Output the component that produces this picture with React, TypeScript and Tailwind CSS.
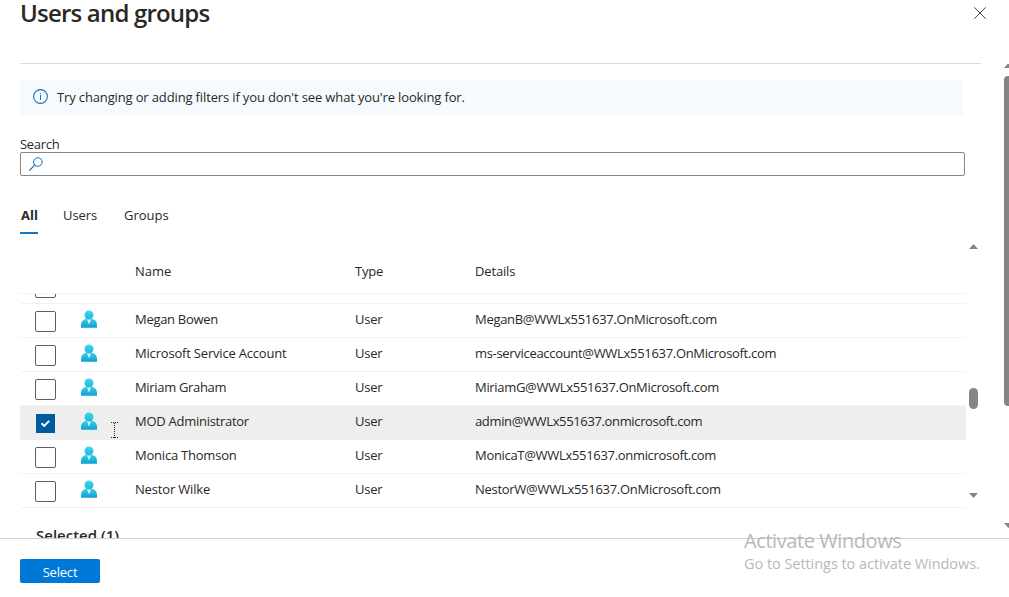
import React from "react";

type Person = { name: string; details: string; checked?: boolean; nameCls: string; detailsCls: string };

const people: Person[] = [
  { name: "Megan Bowen", details: "MeganB@WWLx551637.OnMicrosoft.com", nameCls: "tracking-[-0.3px]", detailsCls: "tracking-[-0.3px]" },
  { name: "Microsoft Service Account", details: "ms-serviceaccount@WWLx551637.OnMicrosoft.com", nameCls: "tracking-[-0.19px]", detailsCls: "tracking-[-0.31px]" },
  { name: "Miriam Graham", details: "MiriamG@WWLx551637.OnMicrosoft.com", nameCls: "tracking-[-0.33px]", detailsCls: "tracking-[-0.31px]" },
  { name: "MOD Administrator", details: "admin@WWLx551637.onmicrosoft.com", checked: true, nameCls: "tracking-[-0.27px]", detailsCls: "tracking-[-0.36px]" },
  { name: "Monica Thomson", details: "MonicaT@WWLx551637.onmicrosoft.com", nameCls: "tracking-[-0.22px]", detailsCls: "tracking-[-0.31px]" },
  { name: "Nestor Wilke", details: "NestorW@WWLx551637.OnMicrosoft.com", nameCls: "tracking-[-0.17px]", detailsCls: "tracking-[-0.28px]" },
];

function Checkbox({ checked }: { checked?: boolean }) {
  if (checked) {
    return (
      <span className="mx-px my-px flex h-[19px] w-[19px] shrink-0 items-center justify-center bg-[#005a9e]">
        <svg width="11" height="9" viewBox="0 0 11 9" fill="none">
          <path d="M1.5 4.3 4.2 6.9 9.2 1.9" stroke="#fff" strokeWidth="2" />
        </svg>
      </span>
    );
  }
  return <span className="block h-[21px] w-[21px] shrink-0 rounded-[2px] border border-[#5f5e5d] bg-white" />;
}

function Avatar() {
  return (
    <svg width="16" height="18" viewBox="0 0 16 18">
      <defs>
        <linearGradient id="body" x1="0" y1="0" x2="0" y2="1">
          <stop offset="0" stopColor="#35cfe8" />
          <stop offset="1" stopColor="#0f9fd0" />
        </linearGradient>
        <linearGradient id="head" x1="0" y1="0" x2="0" y2="1">
          <stop offset="0" stopColor="#3bd8ee" />
          <stop offset="1" stopColor="#1fb8dc" />
        </linearGradient>
      </defs>
      <path d="M0 17.8V15.2C0 11.8 2 9.4 4.6 9H11.4C14 9.4 16 11.8 16 15.2V17.8Z" fill="url(#body)" />
      <path d="M6 9.2H10L8 14.6Z" fill="#f4fcfe" />
      <circle cx="8" cy="5" r="4.5" fill="url(#head)" />
    </svg>
  );
}

function Arrow({ up }: { up?: boolean }) {
  return (
    <svg className="block shrink-0" width="9" height="5" viewBox="0 0 9 5">
      <path d={up ? "M0 5 4.5 0 9 5Z" : "M0 0H9L4.5 5Z"} fill="#858585" />
    </svg>
  );
}

export default function App() {
  return (
    <div className="relative flex h-[597px] w-[1009px] flex-col overflow-hidden bg-white font-['Open_Sans','Noto_Sans',sans-serif] text-[13px] leading-[18px] text-[#292827]">
      <header className="ml-5 flex h-16 w-[961px] shrink-0 items-start justify-between border-b border-[#dcdcdc]">
        <h1 className="whitespace-nowrap text-[24px] font-semibold leading-[25px] tracking-[-0.8px]">Users and groups</h1>
        <svg className="mr-[-5px] mt-[7px]" width="12" height="12" viewBox="0 0 12 12">
          <path d="M0.3 0.3 11.7 11.7M11.7 0.3 0.3 11.7" stroke="#444" strokeWidth="1" />
        </svg>
      </header>

      <main className="flex h-[474px] shrink-0 overflow-hidden">
        <div className="ml-5 flex w-[961px] shrink-0 flex-col">
          <div className="mt-4 flex h-[35px] w-[943px] shrink-0 items-center bg-[#f6faff] pb-[2px] pl-[13px]">
            <svg width="15" height="15" viewBox="0 0 15 15" fill="none">
              <circle cx="7.5" cy="7.5" r="6.9" stroke="#1b6fb5" strokeWidth="1.1" />
              <path d="M7.5 6V11M7.5 4V5.1" stroke="#1b6fb5" strokeWidth="1" />
            </svg>
            <span className="ml-[9px] whitespace-nowrap tracking-[-0.14px]">Try changing or adding filters if you don't see what you're looking for.</span>
          </div>

          <label className="mt-[21px] h-4 leading-[17px] tracking-[-0.3px]">Search</label>
          <div className="flex h-6 w-[945px] shrink-0 items-center rounded-[2px] border border-[#868584] pl-2">
            <svg width="14" height="14" viewBox="0 0 14 14" fill="none">
              <circle cx="8.9" cy="5" r="4.3" stroke="#0f72c0" strokeWidth="1" />
              <path d="M5.7 8.2 0.4 13.5" stroke="#0f72c0" strokeWidth="1.1" />
            </svg>
          </div>

          <nav className="mt-[27px] flex h-[31px] shrink-0 items-start">
            <span className="flex h-[31px] w-[18px] flex-col justify-between border-b-2 border-[#0f78c8] pt-[3px]">
              <span className="pl-px font-bold">All</span>
            </span>
            <span className="ml-[25px] w-[61px] pt-[3px] tracking-[-0.1px]">Users</span>
            <span className="pt-[3px]">Groups</span>
          </nav>

          <div className="flex">
            <section className="flex w-[946px] shrink-0 flex-col">
              <div className="mt-4 flex h-11 items-center border-b border-[#f3f3f3] pb-[2px] pl-[115px]">
                <span className="w-[220px]">Name</span>
                <span className="w-[120px] tracking-[-0.2px]">Type</span>
                <span className="tracking-[-0.15px]">Details</span>
              </div>
              <div className="flex h-[10px] items-end overflow-hidden border-b border-[#f3f3f3] pb-[5px] pl-[15px]">
                <Checkbox />
              </div>
              {people.map((p) => (
                <div
                  key={p.name}
                  className={
                    p.checked
                      ? "flex h-[34px] items-center border-b border-[#eee] bg-[#eee] pb-[2px] pl-[15px]"
                      : "flex h-[34px] items-center border-b border-[#f3f3f3] pb-[2px] pl-[15px]"
                  }
                >
                  <span className="flex w-[46px] pt-[4px]">
                    <Checkbox checked={p.checked} />
                  </span>
                  <span className="w-[54px] pb-px">
                    <Avatar />
                  </span>
                  <span className={"w-[220px] whitespace-nowrap pb-px " + p.nameCls}>{p.name}</span>
                  <span className="w-[120px] pb-px tracking-[-0.2px]">User</span>
                  <span className={"whitespace-nowrap pb-px " + p.detailsCls}>{p.details}</span>
                </div>
              ))}
            </section>
            <div className="ml-[3px] mt-[10px] flex h-[254px] w-[9px] shrink-0 flex-col">
              <Arrow up />
              <span className="mt-[139px] h-[21px] rounded-full bg-[#858585]" />
              <span className="mt-auto">
                <Arrow />
              </span>
            </div>
          </div>

          <h2 className="ml-4 mt-[17px] whitespace-nowrap text-[15px] font-semibold leading-5">Selected (1)</h2>
        </div>

        <div className="-mt-px ml-[23px] flex w-[5px] shrink-0 flex-col overflow-hidden">
          <Arrow up />
          <span className="mt-2 h-[330px] w-[9px] shrink-0 rounded-[4px] bg-[#858585]" />
          <span className="mt-[117px]">
            <Arrow />
          </span>
        </div>
      </main>

      <footer className="flex flex-1 items-start border-t border-[#cfcfcf] pl-5 pt-5">
        <button className="h-6 w-20 rounded-[2px] bg-[#0078d7] pt-[2px] text-center tracking-[-0.2px] text-white">Select</button>
      </footer>

      <svg className="absolute left-[110px] top-[422px]" width="9" height="17" viewBox="0 0 9 17">
        <path d="M1 0.5H4M5 0.5H8M4.5 1V16M1 15.5H4M5 15.5H8" stroke="#222" strokeDasharray="1 1" />
      </svg>

      <div className="pointer-events-none absolute left-[744px] top-[528px] whitespace-nowrap text-[#b8b8b8]">
        <div className="text-[20px] leading-[26px] tracking-[-0.42px]">Activate Windows</div>
        <div className="text-[14.5px] leading-5 tracking-[-0.05px]">Go to Settings to activate Windows.</div>
      </div>
    </div>
  );
}
